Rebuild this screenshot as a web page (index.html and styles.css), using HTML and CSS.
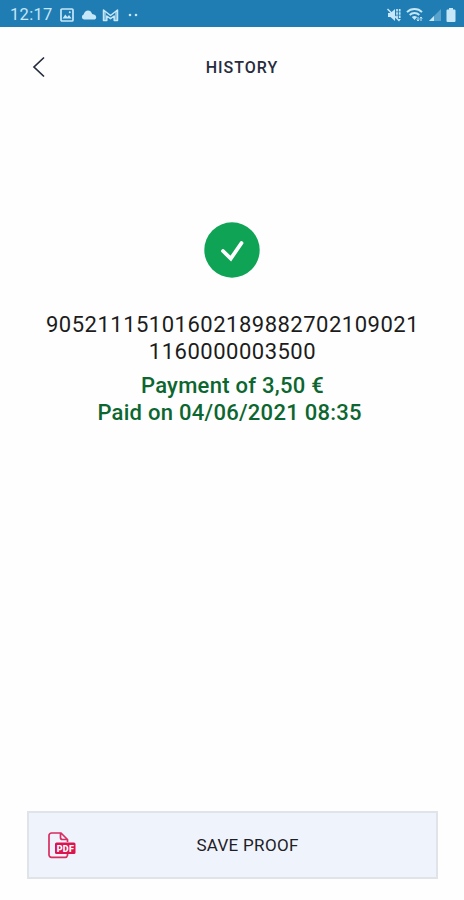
FILE: index.html
```html
<!DOCTYPE html>
<html lang="en">
<head>
  <meta charset="UTF-8">
  <title>History</title>
  <meta name="viewport" content="width=device-width, initial-scale=1">
  <link rel="stylesheet" href="styles.css">
</head>
<body>

<div class="status-bar">
  <span class="time">12:17</span>
  <svg class="icon-image" width="14" height="14" viewBox="0 0 14 14">
    <rect x="1" y="1" width="12" height="12" rx="1" fill="none" stroke="currentColor" stroke-width="1.7"/>
    <path d="M2.5 10.5l2.8-4 2 2.4 1.7-2 2.6 3.6z" fill="currentColor"/>
    <circle cx="9.8" cy="4.3" r="1" fill="currentColor"/>
  </svg>
  <svg class="icon-cloud" width="16" height="10" viewBox="0 0 16 10">
    <path d="M3 9.5a2.6 2.6 0 0 1-.4-5C3.500 2 5 .5 7 .5c2 0 3.300 1.100 4.200 3.500 2.300.3 4 1.500 4 3.200 0 1.500-1 2.300-2.500 2.300z" fill="currentColor"/>
  </svg>
  <svg class="icon-mail" width="17" height="14" viewBox="0 0 17 14">
    <path d="M1.500 12.500V2l7 5.500L15.500 2v10.500h-3.300V8L8.500 10.700 4.800 8v4.500z" fill="none" stroke="currentColor" stroke-width="1.500" stroke-linejoin="round"/>
    <path d="M3 4v8M14 4v8" stroke="currentColor" stroke-width="2" opacity=".6"/>
  </svg>
  <svg class="icon-dots" width="11" height="4" viewBox="0 0 11 4">
    <circle cx="2" cy="2" r="1.300" fill="currentColor"/>
    <circle cx="8" cy="2" r="1.300" fill="currentColor"/>
  </svg>
  <div class="system-icons">
    <svg width="16" height="16" viewBox="0 0 16 16">
      <path d="M2 6h2.500L9 2v12L4.500 10H2z" fill="currentColor"/>
      <path d="M1.500 2l12 12" stroke="currentColor" stroke-width="1.500"/>
      <path d="M11 2v9M13.700 2v11" stroke="currentColor" stroke-width="1.700" stroke-dasharray="2.500 .8"/>
    </svg>
    <svg width="18" height="16" viewBox="0 0 18 16">
      <path d="M1 5.200C5 1 12 1 16 5.200M3.700 8c2.700-2.700 6.900-2.700 9.600 0" fill="none" stroke="currentColor" stroke-width="1.900"/>
      <path d="M5.800 10c1.600-1.500 3.800-1.500 5.400 0l-2.700 3z" fill="currentColor"/>
      <path d="M12 10v4M15 10v4M10.800 12.500l1.200 1.500 1.200-1.500M13.800 11.500L15 10l1.200 1.500" fill="none" stroke="currentColor" stroke-width="1"/>
    </svg>
    <svg width="14" height="16" viewBox="0 0 14 16">
      <path d="M1 14L13 2v12z" fill="currentColor" opacity=".35"/>
      <path d="M1 14l5-5v5z" fill="currentColor"/>
    </svg>
    <svg class="icon-battery" width="10" height="14" viewBox="0 0 10 14">
      <path d="M3 0h4v1.500h1.500a1 1 0 0 1 1 1V13a1 1 0 0 1-1 1h-7a1 1 0 0 1-1-1V2.500a1 1 0 0 1 1-1H3z" fill="currentColor"/>
    </svg>
  </div>
</div>

<header class="header">
  <svg class="back" width="14" height="22" viewBox="0 0 14 22">
    <path d="M12 1.500L2 11l10 9.500" fill="none" stroke="currentColor" stroke-width="1.700"/>
  </svg>
  <h1>HISTORY</h1>
</header>

<main class="payment">
  <svg class="check" width="56" height="56" viewBox="0 0 56 56">
    <circle cx="28" cy="28" r="27.700" fill="#0fa356"/>
    <path d="M19 29l7.800 7.600L37.500 21" fill="none" stroke="#fff" stroke-width="3.800" stroke-linecap="round"/>
  </svg>
  <p class="code">90521115101602189882702109021<br>1160000003500</p>
  <p class="details">Payment of 3,50 €<br>Paid on 04/06/2021 08:35&nbsp;</p>
</main>

<button class="save">
  <svg class="icon-pdf" width="28" height="27" viewBox="0 0 28 27">
    <path d="M8 25.300H3.500a2.500 2.500 0 0 1-2.500-2.500V3.500A2.500 2.500 0 0 1 3.500 1H13l6.500 6.500V10M8 25.300h9a2.500 2.500 0 0 0 2.500-2V22M12.500 1v4.500a2 2 0 0 0 2 2h5" fill="none" stroke="#d92c61" stroke-width="1.700"/>
    <rect x="7" y="10.500" width="20.500" height="11.500" rx="1.500" fill="#dc1450"/>
    <text x="17.400" y="19.500" class="pdf-label">PDF</text>
  </svg>
  <span>SAVE PROOF</span>
</button>

</body>
</html>
```
FILE: styles.css
```css
* {
  box-sizing: border-box;
}

body {
  margin: 0;
  height: 900px;
  display: flex;
  flex-direction: column;
  background-color: #fefefe;
  font-family: Roboto, "Liberation Sans", sans-serif;
}

.status-bar {
  height: 27px;
  padding: 2px 8px 0 10px;
  display: flex;
  align-items: center;
  background-color: #1f7db4;
  color: #c5e7f8;
}

.time {
  width: 50px;
  font-size: 16.5px;
  letter-spacing: 0.3px;
}

.icon-cloud {
  margin-left: 7px;
}

.icon-mail {
  margin-left: 5px;
}

.icon-dots {
  margin-left: 9px;
}

.system-icons {
  margin-left: auto;
  display: flex;
  align-items: center;
  gap: 4px;
}

.header {
  height: 80px;
  padding: 0 32px;
  display: grid;
  grid-template-columns: 14px 1fr 14px;
  align-items: center;
  color: #262c3d;
}

.header h1 {
  margin: 0;
  padding-left: 20px;
  font-size: 16px;
  font-weight: 500;
  letter-spacing: 1px;
  text-align: center;
}

.payment {
  flex: 1;
  padding-top: 115px;
  display: flex;
  flex-direction: column;
  align-items: center;
  text-align: center;
}

.code,
.details {
  margin: 0;
  font-size: 22px;
  line-height: 26.5px;
}

.code {
  margin-top: 34px;
  padding-left: 1px;
  color: #1c1c1c;
  letter-spacing: 0.5px;
}

.details {
  margin-top: 8px;
  padding-left: 1px;
  color: #0c6630;
  font-weight: 500;
  letter-spacing: 0.27px;
}

.save {
  height: 68px;
  margin: 0 26px 21px 27px;
  padding: 0 0 0 19px;
  display: grid;
  grid-template-columns: 28px 1fr;
  align-items: center;
  border: 2px solid #e0e3e8;
  background-color: #eff3fc;
  color: #1d2026;
  font-family: inherit;
  font-size: 17px;
  letter-spacing: 0.3px;
}

.save span {
  padding-right: 17px;
}

.pdf-label {
  fill: #fff;
  font-size: 9px;
  font-weight: 900;
  letter-spacing: 0.3px;
  text-anchor: middle;
}
```
